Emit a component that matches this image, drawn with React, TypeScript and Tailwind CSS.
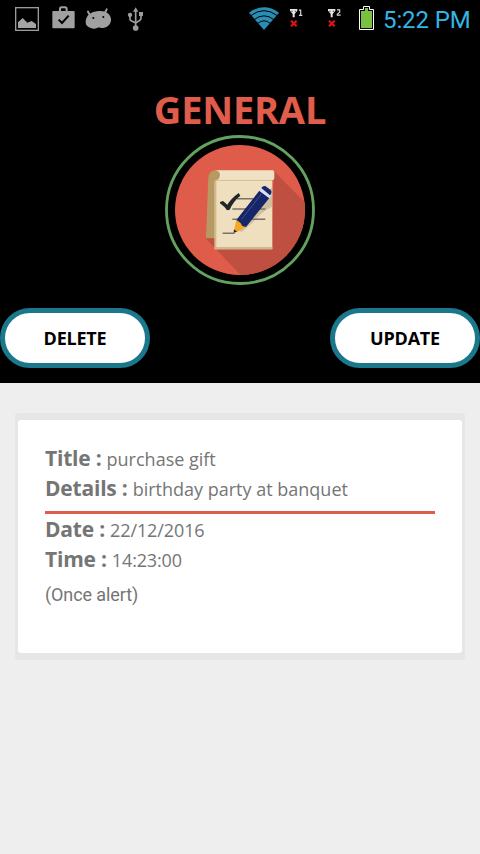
import React from 'react';

const PictureIcon = () => (
    <svg width="24" height="24" viewBox="0 0 72 72">
        <rect x="2" y="2" width="68" height="68" fill="none" stroke="#9c9c9c" strokeWidth="4" />
        <path d="M9 63V46l14-13 14 14 13-5 13 9v12z" fill="#a4a4a4" />
    </svg>
);

const TaskIcon = () => (
    <svg width="23" height="24" viewBox="0 0 69 72">
        <path d="M24 17V9q0-5 5-5h10q5 0 5 5v8" fill="none" stroke="#a0a0a0" strokeWidth="6" />
        <rect x="1" y="15" width="67" height="52" rx="3" fill="#a0a0a0" />
        <path d="M20 41l10 10 20-22" fill="none" stroke="#000" strokeWidth="6" />
    </svg>
);

const DroidIcon = () => (
    <svg width="27" height="21" viewBox="0 0 81 63">
        <path d="M9 11l7 12M65 4l-7 14" stroke="#a0a0a0" strokeWidth="6" strokeLinecap="round" />
        <path d="M2 43C2 22 18 11 40 9c22-2 37 9 38 24 1 14-9 25-23 27-8 1-11-3-17-1-9 4-14 4-19 2C8 58 2 53 2 43z" fill="#a0a0a0" />
        <circle cx="25" cy="30" r="3" fill="#000" />
        <circle cx="55" cy="27" r="3" fill="#000" />
    </svg>
);

const UsbIcon = () => (
    <svg width="17" height="25" viewBox="0 0 51 75">
        <path d="M26 10v53M9 27v9q0 4 5 6l12 6M42 25v9q0 4-5 7l-11 7" fill="none" stroke="#9c9c9c" strokeWidth="5" />
        <path d="M26 1l8 13H18z" fill="#9c9c9c" />
        <circle cx="9" cy="24" r="6.5" fill="#9c9c9c" />
        <rect x="36" y="15" width="12" height="12" fill="#9c9c9c" />
        <circle cx="26" cy="63" r="8.5" fill="#9c9c9c" />
    </svg>
);

const WifiIcon = () => (
    <svg width="30" height="23" viewBox="0 0 90 69">
        <path d="M0 17Q45-15 90 17L45 69z" fill="#2a8db5" />
        <path d="M5 26Q45-4 85 26M15 38Q45 15 75 38M25 50Q45 33 65 50" fill="none" stroke="#000" strokeWidth="3" />
    </svg>
);

const SignalIcon = ({ sim }: { sim: 1 | 2 }) => (
    <svg width="13" height="19" viewBox="0 0 39 57">
        <path d="M0 0h22v5l-8 10v10H8V15L0 5z" fill="#e4e4e4" />
        <path d="M6 5v4M16 5v4" stroke="#000" strokeWidth="2" />
        {sim === 1 ? (
            <path d="M27 3.500h5V18M27 19h10" fill="none" stroke="#d8d8d8" strokeWidth="3.500" />
        ) : (
            <path d="M27 2.500h8v7l-7 6v3h10" fill="none" stroke="#d8d8d8" strokeWidth="3.500" />
        )}
        <path d="M3 35l17 17M20 35l-17 17" stroke="#e01414" strokeWidth="6.500" />
    </svg>
);

const BatteryIcon = () => (
    <svg width="15" height="24" viewBox="0 0 45 72">
        <path d="M1.500 10.500h12v-9h18v9h12v60h-42z" fill="#000" stroke="#fff" strokeWidth="3" />
        <path d="M6 15h12V6h9v9h12v51H6z" fill="#7ac143" />
    </svg>
);

const NoteBadge = () => (
    <svg className="block" width="150" height="150" viewBox="15 15 450 450">
        <defs>
            <clipPath id="disc">
                <circle cx="240" cy="240" r="195" />
            </clipPath>
        </defs>
        <circle cx="240" cy="240" r="220.500" fill="#000" stroke="#62a35f" strokeWidth="8.500" />
        <circle cx="240" cy="240" r="195" fill="#df5c4b" />
        <path clipPath="url(#disc)" d="M342 124L470 252V470H275L137 325l200-60z" fill="#bf4f40" />
        {/* paper roll and front sheet */}
        <path d="M145 145q1-24 23-24h12v204h-42z" fill="#b79a63" />
        <path d="M164 152h173v206H164z" fill="#efdfbf" />
        <path d="M164 351h173v7H164zM164 152h5v206h-5z" fill="#d0b98d" />
        <path d="M165 121h172q6 0 6 7v16q0 6-6 7H172q8-8 8-17 0-11-15-13z" fill="#f0e1c4" />
        <path d="M168 151h169" stroke="#d8c7a5" strokeWidth="3" />
        <path d="M336 171v59q-33 16-56 46l-35 30-10-5z" fill="#cfbf9f" />
        <path d="M231 206h61M217 237h99M217 268h99M188 310h36" stroke="#77736c" strokeWidth="4.500" />
        <path d="M180 216l9-3 13 11q12-19 34-35l5 8q-22 18-32 42l-8 2q-8-12-21-21z" fill="#20262a" />
        {/* pencil */}
        <path d="M229 269l30 20-26 16-12 2z" fill="#f3aa22" />
        <path d="M222 298l9 7-10 3z" fill="#252525" />
        <path d="M229 270l69-88 30 22-70 87-11-3-6-10z" fill="#172569" />
        <path d="M245 268l60-77" stroke="#42508a" strokeWidth="3" />
        <path d="M298 182l7-9 30 23-7 9z" fill="#d7def3" />
        <path d="M304 174q6-9 13-5l15 11q5 5 1 12l-3 4z" fill="#172569" />
    </svg>
);

interface FieldProps {
    label: string;
    value: string;
    valueClass?: string;
}

const Field: React.FC<FieldProps> = ({ label, value, valueClass = '' }) => (
    <div className="flex h-[30px] items-baseline gap-[5px] whitespace-nowrap leading-[30px]">
        <span className="text-[21px] font-bold tracking-[-0.2px]">{label} :</span>
        <span className={`text-[18px] ${valueClass}`}>{value}</span>
    </div>
);

const PillButton = ({ children }: { children: React.ReactNode }) => (
    <button className="h-[60px] w-[150px] rounded-full border-[5px] border-[#1b788c] bg-white text-[18px] font-bold tracking-[-0.2px] text-black">
        {children}
    </button>
);

export default function App() {
    return (
        <div className="flex h-[854px] w-[480px] flex-col overflow-hidden bg-[#eeeeee] font-['Open_Sans',sans-serif]">
            <header className="h-[383px] shrink-0 bg-black">
                {/* Status bar */}
                <div className="flex h-[38px] items-start">
                    <div className="ml-[15px] mt-[7px]"><PictureIcon /></div>
                    <div className="ml-[13px] mt-[6px]"><TaskIcon /></div>
                    <div className="ml-[10px] mt-[8px]"><DroidIcon /></div>
                    <div className="ml-[15px] mt-[7px]"><UsbIcon /></div>
                    <div className="ml-[105px] mt-[7px]"><WifiIcon /></div>
                    <div className="ml-[11px] mt-[9px]"><SignalIcon sim={1} /></div>
                    <div className="ml-[25px] mt-[9px]"><SignalIcon sim={2} /></div>
                    <div className="ml-[18px] mt-[6px]"><BatteryIcon /></div>
                    <span className="ml-[9px] mt-[4px] whitespace-nowrap font-[Roboto,sans-serif] text-[24px] leading-[32px] tracking-[-0.1px] text-[#33b5e5]">5:22 PM</span>
                </div>

                <h1 className="mt-[45px] text-center text-[38px] font-bold leading-[52px] tracking-[-0.2px] text-[#e05c4b]">GENERAL</h1>
                <div className="flex justify-center">
                    <NoteBadge />
                </div>

                <div className="mt-[23px] flex justify-between">
                    <PillButton>DELETE</PillButton>
                    <PillButton>UPDATE</PillButton>
                </div>
            </header>

            <main className="mx-[15px] mt-[30px] rounded-[3px] bg-[#e6e6e6] px-[3px] py-[7px] text-[#757575]">
                <div className="h-[233px] rounded-[3px] bg-white px-[27px] pt-[23px]">
                    <Field label="Title" value="purchase gift" />
                    <Field label="Details" value="birthday party at banquet" />
                    <div className="mt-[8px] h-[3px] bg-[#df5c4b]" />
                    <Field label="Date" value="22/12/2016" valueClass="tracking-[-0.1px]" />
                    <Field label="Time" value="14:23:00" valueClass="tracking-[-0.15px]" />
                    <p className="mt-[8px] font-[Roboto,sans-serif] text-[18px] leading-[26px] tracking-[-0.1px]">(Once alert)</p>
                </div>
            </main>
        </div>
    );
}
